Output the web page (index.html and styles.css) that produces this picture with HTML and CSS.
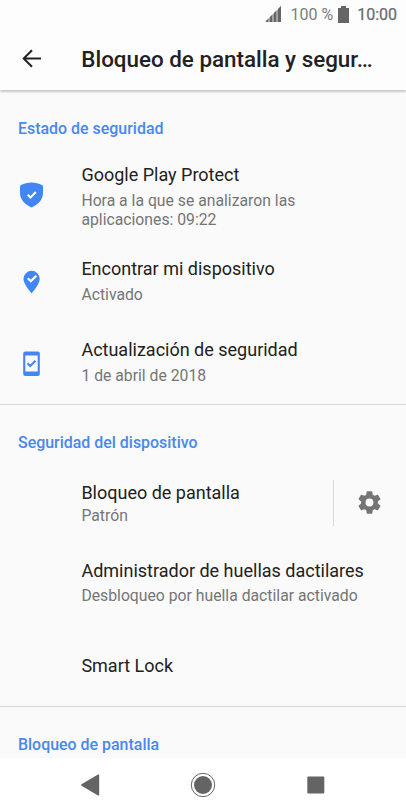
FILE: index.html
```html
<!DOCTYPE html>
<html lang="es">
<head>
<meta charset="utf-8">
<title>Bloqueo de pantalla y seguridad</title>
<link rel="stylesheet" href="styles.css">
</head>
<body>
<div class="status">
  <svg class="signal" width="16" height="16" viewBox="0 0 16 16"><path opacity=".6" d="M0 16L16 0v16z"/><path d="M1 16v-1l2-2v3zM5 16v-5l2-2v7zM9 16V7l2-2v11zM13 16V3l3-3v16z"/></svg>
  <span class="pct">100 %</span>
  <svg class="battery" width="11" height="17" viewBox="0 0 11 17"><path d="M3 0h5v2h3v15H0V2h3z"/></svg>
  <span class="clock">10:00</span>
</div>
<header class="bar">
  <svg class="back" width="24" height="24" viewBox="0 0 24 24"><path d="M21 11.500H4.500M12 3.200L3.700 11.500l8.300 8.300"/></svg>
  <h1>Bloqueo de pantalla y segur…</h1>
</header>
<main>
  <section class="group">
    <h2>Estado de seguridad</h2>
    <div class="row protect">
      <svg class="icon" width="28" height="28" viewBox="0 0 28 28"><path class="blue" d="M13.500 1.500C17 1.700 21 2.500 24.300 4.200Q25 4.600 25 5.500v6.500c0 6-4.500 11.500-11.500 14.500C6.500 23.500 2 18 2 12V5.500q0-.9.700-1.300C6 2.500 10 1.700 13.500 1.500z"/><path class="tick" d="M9.700 13.700l2.700 2.700 5.500-5.500"/></svg>
      <div><h3>Google Play Protect</h3><p>Hora a la que se analizaron las<br>aplicaciones: 09:22</p></div>
    </div>
    <div class="row find">
      <svg class="icon" width="28" height="28" viewBox="0 0 28 28"><path class="blue" d="M13.600 2.800a8.100 8.100 0 0 0-8.100 8.100c0 5.500 8.100 14.300 8.100 14.300s8.100-8.800 8.100-14.300a8.100 8.100 0 0 0-8.100-8.100z"/><path class="tick" d="M9.800 10.300l3 3 5.500-5.500"/></svg>
      <div><h3>Encontrar mi dispositivo</h3><p>Activado</p></div>
    </div>
    <div class="row update">
      <svg class="icon" width="28" height="28" viewBox="0 0 28 28"><path class="blue" fill-rule="evenodd" d="M7.200 1.500h12.600a2 2 0 0 1 2 2v20.500a2 2 0 0 1-2 2H7.200a2 2 0 0 1-2-2V3.500a2 2 0 0 1 2-2zM7.300 5.500v16h12.400v-16z"/><path class="check" d="M9.500 13.300l2.700 2.700 5.300-5.300"/></svg>
      <div><h3>Actualización de seguridad</h3><p>1 de abril de 2018</p></div>
    </div>
  </section>
  <section class="group device">
    <h2>Seguridad del dispositivo</h2>
    <div class="row lock">
      <div><h3>Bloqueo de pantalla</h3><p>Patrón</p></div>
      <div class="settings"><svg width="27" height="27" viewBox="0 0 24 24"><path d="M19.430 12.980c.04-.32.07-.64.07-.98s-.03-.66-.07-.98l2.110-1.650c.19-.15.24-.42.12-.64l-2-3.460c-.12-.22-.39-.3-.61-.22l-2.490 1c-.52-.4-1.080-.73-1.690-.98l-.38-2.650C14.460 2.180 14.250 2 14 2h-4c-.25 0-.46.18-.49.42l-.38 2.650c-.61.25-1.170.59-1.690.98l-2.490-1c-.23-.09-.49 0-.61.22l-2 3.460c-.13.22-.07.49.12.64l2.110 1.650c-.04.32-.07.65-.07.98s.03.66.07.98l-2.110 1.650c-.19.15-.24.42-.12.64l2 3.460c.12.22.39.3.61.22l2.490-1c.52.4 1.080.73 1.690.98l.38 2.650c.03.24.24.42.49.42h4c.25 0 .46-.18.49-.42l.38-2.650c.61-.25 1.170-.59 1.690-.98l2.490 1c.23.09.49 0 .61-.22l2-3.460c.12-.22.07-.49-.12-.64zM12 15.500a3.500 3.500 0 1 1 0-7 3.500 3.500 0 0 1 0 7z"/></svg></div>
    </div>
    <div class="row finger"><div><h3>Administrador de huellas dactilares</h3><p>Desbloqueo por huella dactilar activado</p></div></div>
    <div class="row smart"><div><h3>Smart Lock</h3></div></div>
  </section>
  <section class="group last"><h2>Bloqueo de pantalla</h2></section>
</main>
<nav>
  <svg width="28" height="28" viewBox="0 0 28 28"><path d="M5.500 13.200L22 3.600q1.200-.5 1.200.8v19.200q0 1.300-1.200.8L5.500 14.800q-1-.8 0-1.600z"/></svg>
  <svg width="28" height="28" viewBox="0 0 28 28"><circle class="ring" cx="14" cy="14" r="11.700"/><circle cx="14" cy="14" r="9"/></svg>
  <svg width="28" height="28" viewBox="0 0 28 28"><rect x="5.300" y="5.500" width="17" height="17" rx="1"/></svg>
</nav>
</body>
</html>
```
FILE: styles.css
```css
* { box-sizing: border-box; }
body { margin: 0; width: 406px; height: 812px; overflow: hidden; display: flex; flex-direction: column; background: #fafafa; font-family: Roboto, sans-serif; color: #212121; }
h1, h2, h3, p { margin: 0; white-space: nowrap; }
.status { height: 28px; flex: none; display: flex; align-items: center; justify-content: flex-end; padding-right: 9px; font-size: 16px; color: #6b6b6b; fill: #666; background: #fdfdfd; z-index: 2; }
.pct { margin: 0 5px 0 9px; color: #7c7c7c; }
.clock { margin-left: 8px; -webkit-text-stroke: .25px #6b6b6b; }
.bar { height: 62px; flex: none; display: flex; align-items: center; padding-left: 20px; background: #fdfdfd; box-shadow: 0 2px 2px rgba(0,0,0,.2); z-index: 1; }
.bar h1 { margin-left: 37.3px; font-size: 22.4px; font-weight: 500; }
.back { fill: none; stroke: #222; stroke-width: 2; }
main { flex: 1; min-height: 0; overflow: hidden; }
.group { height: 315px; border-bottom: 1px solid #d8d8d8; }
.group h2 { padding: 29px 0 0 18px; font-size: 15.95px; line-height: 20px; font-weight: 500; color: #4a87ed; }
.row { display: flex; padding-left: 81.4px; }
.icon { margin-left: -63.4px; margin-right: 35.4px; }
.row h3 { font-size: 18px; line-height: 24px; font-weight: 400; }
.row p { margin-top: 5px; font-size: 15.75px; line-height: 18.500px; color: #757575; }
.blue { fill: #4285f4; }
.tick, .check { fill: none; stroke: #fff; stroke-width: 2.1; }
.check { stroke: #4285f4; }
nav { height: 54px; flex: none; display: flex; justify-content: space-between; align-items: center; padding: 0 76px; background: #fff; fill: #646464; }
.ring { fill: none; stroke: #646464; stroke-width: 1; }
.protect { height: 94px; padding-top: 24px; }
.protect .icon { margin-top: 17.5px; }
.find { height: 81px; padding-top: 24px; }
.find .icon { margin-top: 11px; }
.update { padding-top: 24px; }
.update .icon { margin-top: 11.5px; }
.group.device { height: 302px; }
.device h2 { padding-top: 28px; }
.lock { height: 78px; padding-top: 28px; }
.lock p { margin-top: 2px; }
.settings { margin-left: auto; margin-top: -1px; width: 73px; height: 46px; border-left: 1px solid #d8d8d8; display: flex; align-items: center; justify-content: center; padding: 0 1px 1px 0; fill: #757575; }
.finger { padding-top: 28px; }
.finger p { margin-top: 4px; }
.smart { padding-top: 48px; }
.group.last { height: 51px; border: 0; }
.last h2 { padding-top: 28px; }
```
